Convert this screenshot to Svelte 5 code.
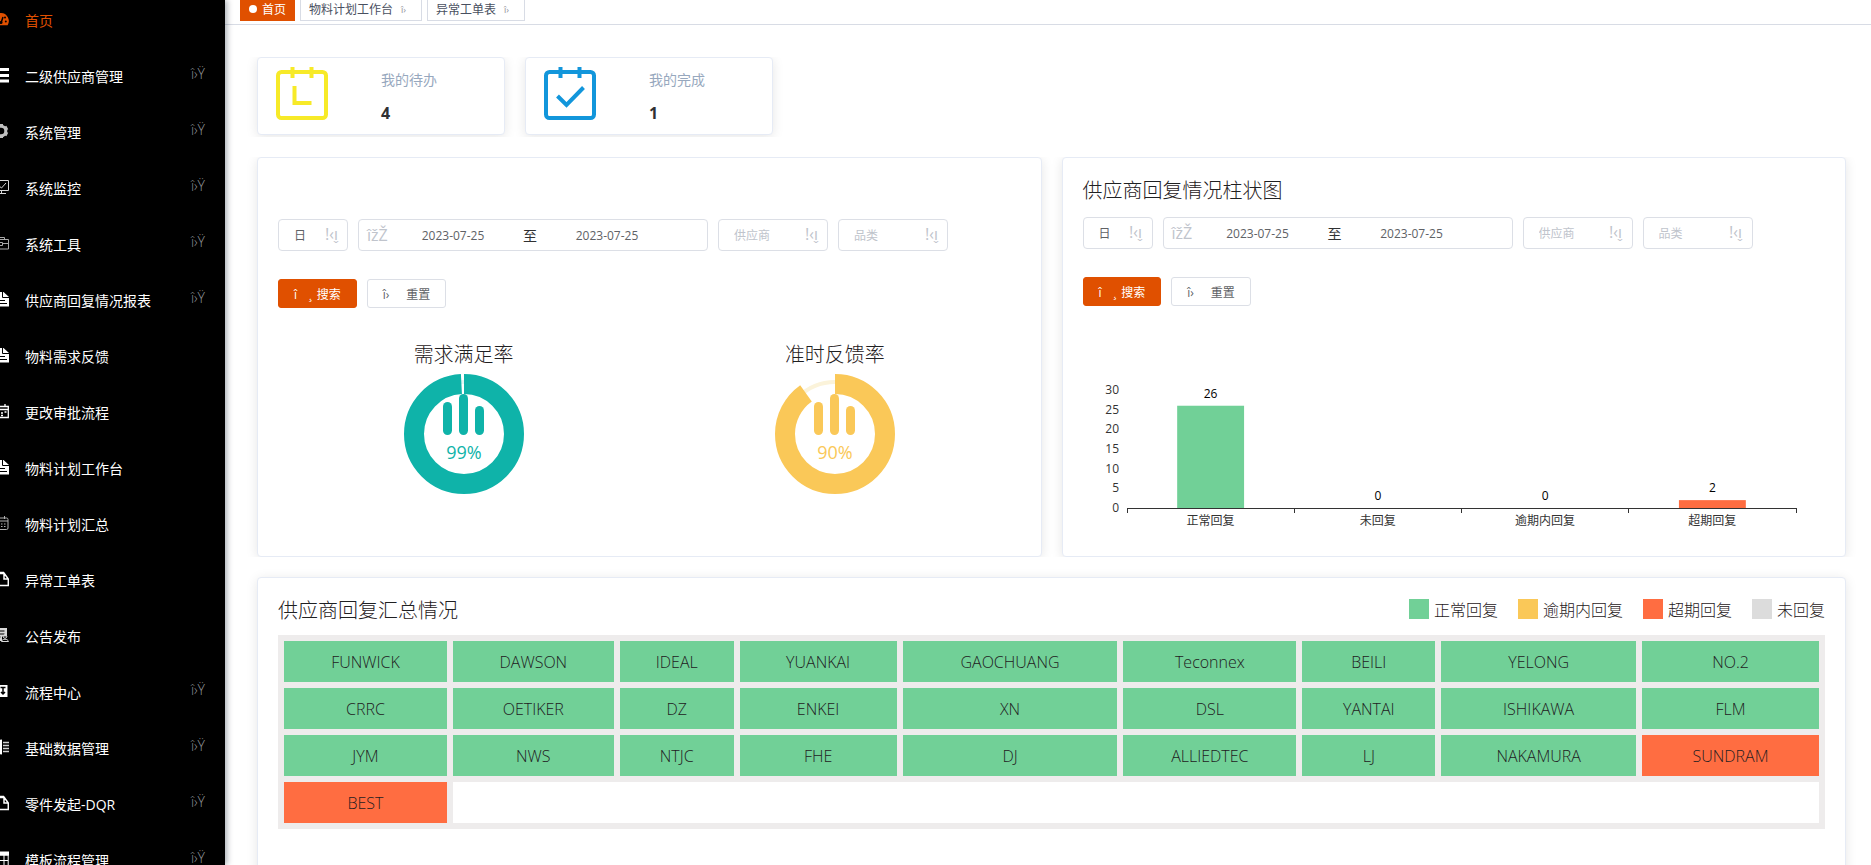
<script>
    // Sidebar entries, "sub" marks the ones that open a submenu
    const menu = [
        { name: '首页', icon: 'dashboard', active: true },
        { name: '二级供应商管理', icon: 'list', sub: true },
        { name: '系统管理', icon: 'gear', sub: true },
        { name: '系统监控', icon: 'monitor', sub: true },
        { name: '系统工具', icon: 'tool', sub: true },
        { name: '供应商回复情况报表', icon: 'doc', sub: true },
        { name: '物料需求反馈', icon: 'doc' },
        { name: '更改审批流程', icon: 'schedule' },
        { name: '物料计划工作台', icon: 'doc' },
        { name: '物料计划汇总', icon: 'date' },
        { name: '异常工单表', icon: 'copy' },
        { name: '公告发布', icon: 'notice' },
        { name: '流程中心', icon: 'flow', sub: true },
        { name: '基础数据管理', icon: 'book', sub: true },
        { name: '零件发起-DQR', icon: 'copy', sub: true },
        { name: '模板流程管理', icon: 'table', sub: true },
    ];

    const tabs = ['物料计划工作台', '异常工单表'];

    const panels = ['rate', 'bar'];

    const rings = [
        { title: '需求满足率', value: 99, color: '#0fb3a9', track: '#e3f6f4' },
        { title: '准时反馈率', value: 90, color: '#fac858', track: '#fbf3da' },
    ];
    const ringLength = 2 * Math.PI * 50;

    const bars = [
        { name: '正常回复', value: 26, color: '#71d097' },
        { name: '未回复', value: 0, color: '#dcdcdc' },
        { name: '逾期内回复', value: 0, color: '#fac858' },
        { name: '超期回复', value: 2, color: '#ff6d41' },
    ];
    const yTicks = [0, 5, 10, 15, 20, 25, 30];

    const legend = [
        { name: '正常回复', cls: 'ok' },
        { name: '逾期内回复', cls: 'within' },
        { name: '超期回复', cls: 'late' },
        { name: '未回复', cls: 'none' },
    ];

    const columns = [163, 161, 114, 157, 215, 173, 133, 195, 177];
    const columnSum = columns.reduce((a, b) => a + b, 0);
    const suppliers = [
        ['FUNWICK', 'DAWSON', 'IDEAL', 'YUANKAI', 'GAOCHUANG', 'Teconnex', 'BEILI', 'YELONG', 'NO.2'],
        ['CRRC', 'OETIKER', 'DZ', 'ENKEI', 'XN', 'DSL', 'YANTAI', 'ISHIKAWA', 'FLM'],
        ['JYM', 'NWS', 'NTJC', 'FHE', 'DJ', 'ALLIEDTEC', 'LJ', 'NAKAMURA', 'SUNDRAM'],
        ['BEST'],
    ];
    const late = ['SUNDRAM', 'BEST'];

    // Bar chart geometry
    let chartWidth = 743;
    const axisY = 162;
    const axisLeft = 44;
    const unit = 118 / 30;
    $: step = (chartWidth - axisLeft - 30) / bars.length;
</script>

<div class="app">
    <nav class="sidebar">
        <ul class="menu">
            {#each menu as item}
                <li>
                    <a href="#top" class:active={item.active}>
                        <svg class="menu-icon" viewBox="0 0 16 16" width="16" height="16" fill="none" stroke="currentColor">
                            {#if item.icon === 'dashboard'}
                                <path d="M8 2a8 8 0 0 1 6.6 12.2H1.4A8 8 0 0 1 8 2z" fill="currentColor" stroke="none" />
                                <path d="M8 12l2-6" stroke="#000" stroke-width="1.5" />
                                <circle cx="8" cy="11.5" r="1.5" fill="#000" stroke="none" />
                                <circle cx="12.8" cy="10.5" r="1" fill="#000" stroke="none" />
                                <circle cx="12" cy="6.5" r="1" fill="#000" stroke="none" />
                                <circle cx="3.5" cy="8.5" r="1" fill="#000" stroke="none" />
                            {:else if item.icon === 'list'}
                                <path d="M0 2.5h16M0 8.5h16M0 14h16" stroke-width="3" />
                            {:else if item.icon === 'gear'}
                                <g stroke="#bfbfbf">
                                    <circle cx="8" cy="8" r="4.8" stroke-width="3" />
                                    <path d="M8 1v2.5M8 12.5V15M1.8 4.5l2.2 1.2M12 10.3l2.3 1.2M1.8 11.5l2.2-1.2M12 5.7l2.3-1.2" stroke-width="4" />
                                </g>
                            {:else if item.icon === 'monitor'}
                                <path d="M.5 1.5h15v10H.5zM8.5 11.5v3M3 14.5h10M5 6l3.5 3L13 4" stroke="#d8d8d8" />
                            {:else if item.icon === 'tool'}
                                <path d="M.5 4.5h15V14H.5zM4.5 4.5v-2h7v2M.5 8.5h6M9.5 8.5h6M6.5 7.5h3v3h-3z" stroke="#a8a8a8" />
                            {:else if item.icon === 'doc'}
                                <path d="M1 1h9.5L16 6v9.5H1z" fill="currentColor" stroke="none" />
                                <path d="M9.5 1v5.5H16M2 9.5h10M2 12.5h12" stroke="#000" />
                            {:else if item.icon === 'schedule'}
                                <path d="M1 3.5h14.3v11H1zM1 6.5h14M4.5 1v3M12 1v3" stroke-width="1.3" />
                                <path d="M4 10h2M8 10h2M11.5 9h2M4 12.5h2M8 12.5h2" stroke-width="1.5" />
                            {:else if item.icon === 'date'}
                                <g stroke="#b0b0b0">
                                    <rect x=".5" y="3" width="14.5" height="11.5" rx="1.5" />
                                    <path d="M.5 6H15M4.5 1v3M11.5 1v3M4 9h2M8 9h1.5M11 9h1.5M4 11.5h2M8 11.5h1.5M11 11.5h1.5" />
                                </g>
                            {:else if item.icon === 'copy'}
                                <path d="M3 14.5V2h8l4.3 6v6.5zM11 2v6h4.3" stroke-width="1.5" />
                                <path d="M1 2h10" stroke-width="2.5" />
                            {:else if item.icon === 'notice'}
                                <path d="M1 1h13v8.5H9V14H1z" fill="#d8d8d8" stroke="none" />
                                <path d="M3.5 4h8M3.5 7h8M3.5 10h4" stroke="#000" />
                                <circle cx="12" cy="9.5" r="1.8" stroke="#d8d8d8" />
                                <path d="M8.5 14.5c.5-3 6.5-3 7 0z" stroke="#d8d8d8" />
                            {:else if item.icon === 'flow'}
                                <path d="M1 2h13.5v12H1z" fill="currentColor" stroke="none" />
                                <path d="M7.5 4.5h5M10 4.500v7M8 9l2 2 2-2" stroke="#000" stroke-width="1.5" />
                            {:else if item.icon === 'book'}
                                <path d="M0 1.5l9-1v15l-9-1z" fill="currentColor" stroke="none" />
                                <path d="M10 3.5h6M10 6.5h6M10 9.5h6M10 12.5h6" stroke="#d0d0d0" stroke-width="1.5" />
                            {:else}
                                <path d="M1 4h14.2v11H1zM1 9.5h14M6 4v11M11 4v11" />
                                <path d="M1 2.5h15" stroke-width="4" />
                            {/if}
                        </svg>
                        <span class="menu-name">{item.name}</span>
                        {#if item.sub}
                            <span class="arrow">î›Ÿ</span>
                        {/if}
                    </a>
                </li>
            {/each}
        </ul>
    </nav>

    <div class="content">
        <div class="tags">
            <a href="#top" class="tag current"><i class="dot"></i>首页</a>
            {#each tabs as tab}
                <span class="tag">
                    <a href="#top">{tab}</a>
                    <button type="button" class="close" aria-label="关闭{tab}">î›</button>
                </span>
            {/each}
        </div>

        <main>
            <div class="row">
                <section class="card todo">
                    <svg viewBox="0 0 52 60" width="52" height="60" fill="none" stroke="#f7ea28" stroke-width="4">
                        <rect x="2" y="6" width="48" height="46" rx="3.5" />
                        <path d="M16.5 1v11M35.5 1v11M18.5 20v17h17" />
                    </svg>
                    <div class="todo-text">
                        <span class="todo-name">我的待办</span>
                        <strong>4</strong>
                    </div>
                </section>
                <section class="card todo">
                    <svg viewBox="0 0 52 60" width="52" height="60" fill="none" stroke="#1296db" stroke-width="4">
                        <rect x="2" y="6" width="48" height="46" rx="3.5" />
                        <path d="M16.5 1v11M35.5 1v11M13.5 30l9 9 17-17.500" />
                    </svg>
                    <div class="todo-text">
                        <span class="todo-name">我的完成</span>
                        <strong>1</strong>
                    </div>
                </section>
            </div>

            <div class="row">
                {#each panels as panel}
                    <section class="card panel">
                        {#if panel === 'bar'}
                            <h2>供应商回复情况柱状图</h2>
                        {:else}
                            <div class="no-title"></div>
                        {/if}

                        <form>
                            <div class="filters">
                                <div class="select short">
                                    <select aria-label="周期">
                                        <option>日</option>
                                    </select>
                                    <span class="caret">î›¡</span>
                                </div>
                                <div class="date-range">
                                    <span class="date-icon">îžŽ</span>
                                    <input type="text" value="2023-07-25" aria-label="开始日期" />
                                    <span class="to">至</span>
                                    <input type="text" value="2023-07-25" aria-label="结束日期" />
                                </div>
                                <div class="select empty">
                                    <select aria-label="供应商">
                                        <option>供应商</option>
                                    </select>
                                    <span class="caret">î›¡</span>
                                </div>
                                <div class="select empty">
                                    <select aria-label="品类">
                                        <option>品类</option>
                                    </select>
                                    <span class="caret">î›¡</span>
                                </div>
                            </div>
                            <div class="buttons">
                                <button type="button" class="primary"><span>î&emsp;¸</span>搜索</button>
                                <button type="button"><span>î›&emsp;</span>重置</button>
                            </div>
                        </form>

                        {#if panel === 'rate'}
                            <div class="rings">
                                {#each rings as ring}
                                    <figure>
                                        <figcaption>{ring.title}</figcaption>
                                        <svg viewBox="-60 -60 120 120" width="120" height="120">
                                            <circle r="52" fill="none" stroke={ring.track} stroke-width="4" />
                                            <circle
                                                r="50"
                                                fill="none"
                                                stroke={ring.color}
                                                stroke-width="20"
                                                stroke-dasharray="{ringLength * ring.value / 100} {ringLength}"
                                                transform="rotate(-90)"
                                            />
                                            <g fill={ring.color}>
                                                <rect x="-21" y="-32" width="9" height="33" rx="4.5" />
                                                <rect x="-5" y="-40" width="9" height="41" rx="4.5" />
                                                <rect x="11" y="-28" width="9" height="29" rx="4.5" />
                                            </g>
                                            <text class="ring-label" y="25" text-anchor="middle" fill={ring.color}>{ring.value}%</text>
                                        </svg>
                                    </figure>
                                {/each}
                            </div>
                        {:else}
                            <div class="bar-chart" bind:clientWidth={chartWidth}>
                                <svg width={chartWidth} height="190">
                                    {#each yTicks as tick}
                                        <text class="axis-label" x="36" y={axisY - tick * unit + 4} text-anchor="end">{tick}</text>
                                    {/each}

                                    {#each bars as bar, i}
                                        <rect
                                            x={axisLeft + step * (i + 0.3)}
                                            y={axisY - bar.value * unit}
                                            width={step * 0.4}
                                            height={bar.value * unit}
                                            fill={bar.color}
                                        />
                                        <text class="bar-value" x={axisLeft + step * (i + 0.5)} y={axisY - bar.value * unit - 8} text-anchor="middle">{bar.value}</text>
                                        <text class="axis-label" x={axisLeft + step * (i + 0.5)} y={axisY + 17} text-anchor="middle">{bar.name}</text>
                                    {/each}

                                    <!-- x axis with its ticks -->
                                    <g class="axis">
                                        <line x1={axisLeft} y1={axisY} x2={axisLeft + step * bars.length} y2={axisY} />
                                        {#each [0, 1, 2, 3, 4] as i}
                                            <line x1={axisLeft + step * i} y1={axisY} x2={axisLeft + step * i} y2={axisY + 5} />
                                        {/each}
                                    </g>
                                </svg>
                            </div>
                        {/if}
                    </section>
                {/each}
            </div>

            <section class="card panel">
                <div class="summary-head">
                    <h2>供应商回复汇总情况</h2>
                    <ul class="legend">
                        {#each legend as item}
                            <li><i class={item.cls}></i>{item.name}</li>
                        {/each}
                    </ul>
                </div>
                <table>
                    <colgroup>
                        {#each columns as width}
                            <col style="width: {width / columnSum * 100}%" />
                        {/each}
                    </colgroup>
                    <tbody>
                        {#each suppliers as line}
                            <tr>
                                {#each line as name}
                                    <td class={late.includes(name) ? 'late' : 'ok'}>{name}</td>
                                {/each}
                                {#if line.length < columns.length}
                                    <td class="blank" colspan={columns.length - line.length}></td>
                                {/if}
                            </tr>
                        {/each}
                    </tbody>
                </table>
            </section>
        </main>
    </div>
</div>

<style>
    :global(body) {
        overflow: hidden;
        background: #fff;
    }

    .app {
        display: flex;
        height: 100vh;
        overflow: hidden;
        color: #303133;
        font-family: "Open Sans", "Noto Sans CJK SC", sans-serif;
        font-size: 14px;
    }

    .app * {
        box-sizing: border-box;
    }

    a {
        color: inherit;
        text-decoration: none;
    }

    ul {
        margin: 0;
        padding: 0;
        list-style: none;
    }

    button, select, input {
        font-family: inherit;
        font-size: 12px;
    }

    /* sidebar */
    .sidebar {
        z-index: 1;
        flex: none;
        width: 225px;
        overflow: hidden;
        background: #000;
        box-shadow: 2px 0 6px rgba(0, 21, 41, 0.35);
        clip-path: inset(0 -10px 0 0);
    }

    .menu {
        margin: -8px 0 0 -7px;
    }

    .menu a {
        display: flex;
        align-items: center;
        gap: 16px;
        height: 56px;
        padding-right: 20px;
        color: #fff;
    }

    .menu a.active {
        color: #e05000;
    }

    .menu-icon {
        flex: none;
        margin-bottom: 2px;
    }

    .menu-name {
        flex: 1;
    }

    .arrow {
        padding-bottom: 6px;
        color: #909399;
        font-size: 14px;
        font-weight: 300;
    }

    /* opened pages */
    .content {
        flex: 1;
        min-width: 0;
    }

    .tags {
        display: flex;
        align-items: flex-end;
        gap: 5px;
        height: 25px;
        padding: 0 15px 3px;
        border-bottom: 1px solid #d8dce5;
    }

    .tag {
        display: flex;
        flex: none;
        align-items: center;
        height: 24px;
        padding: 0 8px;
        border: 1px solid #d8dce5;
        color: #495060;
        font-size: 12px;
    }

    .tag.current {
        gap: 5px;
        border-color: #e05000;
        background: #e05000;
        color: #fff;
    }

    .dot {
        width: 8px;
        height: 8px;
        border-radius: 50%;
        background: #fff;
    }

    .close {
        width: 20px;
        padding: 0 0 0 8px;
        border: 0;
        background: none;
        color: #909399;
        font-size: 9px;
        text-align: left;
    }

    main {
        padding: 32px 25px 20px 32px;
    }

    .row {
        display: flex;
        gap: 20px;
        margin: 0 -10px 20px;
        padding: 0 10px;
        overflow: hidden;
    }

    .card {
        border: 1px solid #e6ebf5;
        border-radius: 4px;
        background: #fff;
        box-shadow: 0 2px 12px rgba(0, 0, 0, 0.1);
    }

    .todo {
        display: flex;
        align-items: center;
        gap: 53px;
        width: 248px;
        height: 78px;
        margin-bottom: 2px;
        padding-left: 18px;
    }

    .todo-text {
        display: flex;
        flex-direction: column;
        gap: 13px;
        line-height: 20px;
    }

    .todo-name {
        color: #97a8be;
    }

    .todo strong {
        font-size: 16px;
    }

    .panel {
        flex: 1;
        min-width: 0;
        min-height: 400px;
        padding: 20px;
    }

    h2 {
        margin: 0 0 14px;
        color: #1f2022;
        font-size: 20px;
        font-weight: 300;
        line-height: 25px;
    }

    .no-title {
        height: 41px;
    }

    /* filters */
    .filters {
        display: flex;
        gap: 10px;
        margin-bottom: 28px;
    }

    .select {
        position: relative;
        width: 110px;
    }

    .select.short {
        width: 70px;
    }

    select {
        width: 100%;
        height: 32px;
        padding: 0 30px 0 15px;
        border: 1px solid #dcdfe6;
        border-radius: 4px;
        appearance: none;
        background: #fff;
        color: #606266;
    }

    .empty select {
        color: #c0c4cc;
    }

    .caret {
        position: absolute;
        top: 8px;
        right: 10px;
        color: #c0c4cc;
        font-size: 16px;
        line-height: 20px;
        transform: rotate(180deg);
        pointer-events: none;
    }

    .date-range {
        display: flex;
        align-items: center;
        width: 350px;
        height: 32px;
        padding: 0 36px 0 8px;
        border: 1px solid #dcdfe6;
        border-radius: 4px;
    }

    .date-icon {
        width: 22px;
        color: #c0c4cc;
        font-size: 16px;
        line-height: 20px;
    }

    .date-range input {
        flex: 1;
        min-width: 0;
        padding: 0;
        border: 0;
        background: none;
        color: #606266;
        text-align: center;
    }

    .to {
        width: 26px;
        text-align: center;
    }

    .buttons {
        display: flex;
        gap: 10px;
    }

    .buttons button {
        height: 29px;
        padding: 0 15px;
        border: 1px solid #dcdfe6;
        border-radius: 3px;
        background: #fff;
        color: #606266;
    }

    .buttons .primary {
        border-color: #e05000;
        background: #e05000;
        color: #fff;
    }

    .buttons span {
        margin-right: 5px;
    }

    /* charts */
    .rings {
        display: flex;
        margin-top: 33px;
    }

    figure {
        display: flex;
        flex: 1;
        flex-direction: column;
        align-items: center;
        gap: 6px;
        margin: 0;
    }

    figcaption {
        color: #1f2022;
        font-size: 20px;
        font-weight: 300;
        line-height: 27px;
    }

    .ring-label {
        font-size: 18px;
    }

    .bar-chart {
        margin-top: 40px;
        overflow: hidden;
    }

    .bar-chart svg {
        display: block;
    }

    .axis line {
        stroke: #333;
        stroke-width: 1px;
        shape-rendering: crispEdges;
    }

    .axis-label {
        fill: #333;
        font-size: 12px;
    }

    .bar-value {
        fill: #000;
        font-size: 12px;
    }

    /* supplier summary */
    .summary-head {
        display: flex;
        justify-content: space-between;
        margin-bottom: 12px;
    }

    .summary-head h2 {
        margin: 0;
    }

    .legend {
        display: flex;
        gap: 20px;
        color: #1f2022;
        font-size: 16px;
        font-weight: 300;
    }

    .legend li {
        display: flex;
        align-items: center;
        gap: 5px;
        height: 22px;
    }

    .legend i {
        width: 20px;
        height: 20px;
    }

    .ok {
        background: #71d097;
    }

    .within {
        background: #fac858;
    }

    .late {
        background: #ff6d41;
    }

    .none {
        background: #dcdcdc;
    }

    table {
        width: 100%;
        border-spacing: 6px;
        background: #eeecec;
        table-layout: fixed;
    }

    td {
        height: 41px;
        padding: 0;
        color: #1f2022;
        font-size: 16px;
        font-weight: 300;
        text-align: center;
    }

    .blank {
        background: #fff;
    }
</style>
